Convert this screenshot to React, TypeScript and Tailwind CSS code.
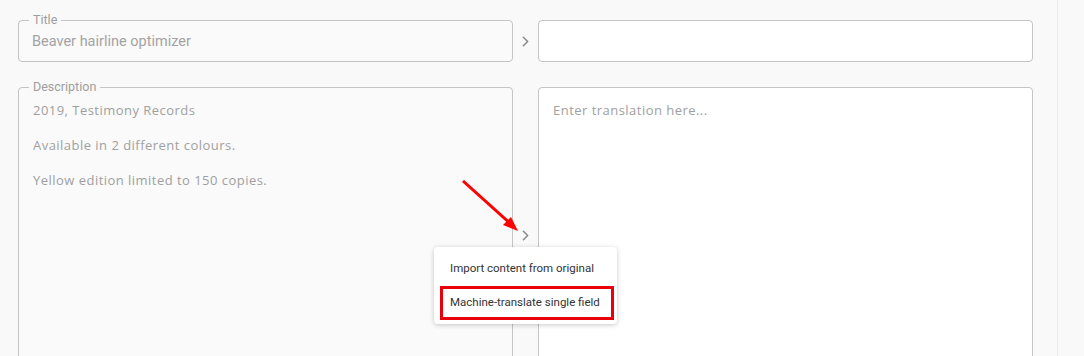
import { ChevronRight } from "lucide-react";

function Chevron() {
  return <ChevronRight className="size-[17px] text-[#8a8a8a]" strokeWidth={2.2} />;
}

function MenuPopup() {
  return (
    <div className="absolute left-[-79px] top-[160px] z-10 w-[183px] rounded-[4px] bg-white py-[4px] shadow-[0_1px_5px_rgba(0,0,0,0.22)] font-['Roboto',sans-serif] text-[11.5px] text-[#333]">
      <div className="px-[16px] py-[9px]">Import content from original</div>
      <div className="ml-[6px] mr-[3px] border-[3px] border-[#e8000b] px-[7px] py-[5px]">
        Machine-translate single field
      </div>
    </div>
  );
}

export default function App() {
  return (
    <div className="flex h-[356px] w-[1084px] overflow-hidden bg-[#f9f9f9] font-['Roboto',sans-serif]">
      <div className="relative flex-1 pl-[18px] pr-[24px] pt-[20px]">
        {/* Title row */}
        <div className="flex items-stretch">
          <div className="relative h-[42px] w-[495px] rounded-[4px] border border-[#c4c4c4] bg-[#fafafa]">
            <span className="absolute left-[10px] top-[-8px] bg-[#f9f9f9] px-[4px] text-[12.5px] leading-[14px] text-[#9e9e9e]">
              Title
            </span>
            <div className="flex h-full items-center px-[13px] pt-[1px] text-[14.5px] text-[#a3a3a3]">
              Beaver hairline optimizer
            </div>
          </div>
          <div className="flex w-[25px] items-center justify-center">
            <Chevron />
          </div>
          <div className="h-[42px] w-[495px] rounded-[4px] border border-[#c4c4c4] bg-white" />
        </div>

        {/* Description row */}
        <div className="mt-[25px] flex items-stretch">
          <div className="relative h-[296px] w-[495px] rounded-[4px] border border-[#c4c4c4] bg-[#fafafa]">
            <span className="absolute left-[10px] top-[-8px] bg-[#f9f9f9] px-[4px] text-[12.5px] leading-[14px] text-[#9e9e9e]">
              Description
            </span>
            <div className="space-y-[14px] px-[14px] pt-[12px] font-['Open_Sans',sans-serif] text-[13px] leading-[21px] tracking-[0.47px] text-[#a0a0a0]">
              <p>2019, Testimony Records</p>
              <p>Available in 2 different colours.</p>
              <p>Yellow edition limited to 150 copies.</p>
            </div>
          </div>
          <div className="relative flex w-[25px] items-center justify-center">
            <Chevron />
            <MenuPopup />
            <svg
              className="absolute left-[-51px] top-[93px] z-20"
              width="60"
              height="56"
              viewBox="0 0 60 56"
            >
              <line x1="1" y1="1" x2="50" y2="45" stroke="#f00" strokeWidth="3" />
              <polygon points="56,51 41,45 49,37" fill="#f00" />
            </svg>
          </div>
          <div className="h-[296px] w-[495px] rounded-[4px] border border-[#c4c4c4] bg-white px-[14px] pt-[10px]">
            <span className="font-['Open_Sans',sans-serif] text-[13px] leading-[21px] tracking-[0.47px] text-[#a0a0a0]">
              Enter translation here...
            </span>
          </div>
        </div>
      </div>
      <div className="w-[27px] border-l border-[#ececec] bg-[#f9f9f9]" />
    </div>
  );
}
